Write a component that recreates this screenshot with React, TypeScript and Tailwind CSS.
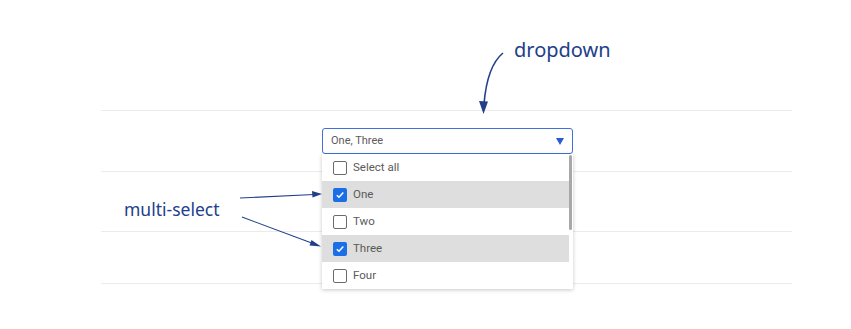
import React from 'react';

const options = [
  { label: 'Select all', checked: false },
  { label: 'One', checked: true },
  { label: 'Two', checked: false },
  { label: 'Three', checked: true },
  { label: 'Four', checked: false },
];

const Checkbox: React.FC<{ checked: boolean }> = ({ checked }) =>
  checked ? (
    <span className="flex h-[14px] w-[14px] items-center justify-center rounded-[2px] bg-[#1a6fe6]">
      <svg width="10" height="10" viewBox="0 0 10 10">
        <path d="M1.8 5.2 L4 7.3 L8.3 2.6" fill="none" stroke="#fff" strokeWidth="1.5" />
      </svg>
    </span>
  ) : (
    <span className="h-[14px] w-[14px] rounded-[2px] border-[1.5px] border-[#6b6b6b] bg-white" />
  );

const App: React.FC = () => {
  return (
    <div className="relative h-[329px] w-[851px] overflow-hidden bg-white font-['Roboto',sans-serif]">
      {/* table rows */}
      <div className="ml-[101px] w-[691px] pt-[110px]">
        <div className="h-[61px] border-t border-[#ebebeb]" />
        <div className="h-[60px] border-t border-[#ebebeb]" />
        <div className="h-[52px] border-t border-[#ebebeb]" />
        <div className="border-t border-[#ebebeb]" />
      </div>

      {/* dropdown */}
      <div className="absolute left-[322px] top-[128px] w-[251px]">
        <div className="flex h-[26px] items-center justify-between rounded-[3px] border-[1.5px] border-[#3f72d8] bg-white pl-[8px] pr-[8px]">
          <span className="text-[11px] text-[#5c5c5c]">One, Three</span>
          <svg width="8" height="7" viewBox="0 0 8 7">
            <path d="M0 0 H8 L4 7 Z" fill="#2a5bd0" />
          </svg>
        </div>
        <div className="relative bg-white shadow-[0_1px_4px_rgba(0,0,0,0.22)]">
          <div className="mr-[4px] flex flex-col">
            {options.map((o) => (
              <div
                key={o.label}
                className={`flex h-[27px] items-center gap-[6px] pl-[11px] pt-[1px] ${o.checked ? 'bg-[#dedede]' : ''}`}
              >
                <Checkbox checked={o.checked} />
                <span className="text-[11.5px] text-[#5a5a5a]">{o.label}</span>
              </div>
            ))}
          </div>
          <div className="absolute right-[1px] top-[1px] h-[75px] w-[3px] rounded-full bg-[#a8a8a8]" />
        </div>
      </div>

      {/* annotations */}
      <span className="absolute left-[514px] top-[35px] font-['Noto_Sans',sans-serif] text-[20px] text-[#22408a]">
        dropdown
      </span>
      <span className="absolute left-[124px] top-[196px] font-['Noto_Sans',sans-serif] text-[17.5px] text-[#22408a]">
        multi-select
      </span>
      <svg className="pointer-events-none absolute left-0 top-0" width="851" height="329">
        <path d="M503 53 C492 62 486 80 484 104" fill="none" stroke="#22408a" strokeWidth="1.6" />
        <path d="M479 101 L483.5 114 L488 101.5 Z" fill="#22408a" />
        <path d="M240 198 L314 194.5" fill="none" stroke="#22408a" strokeWidth="1.1" />
        <path d="M312 191 L322 194 L312.5 197.5 Z" fill="#22408a" />
        <path d="M242 217 L313 243.5" fill="none" stroke="#22408a" strokeWidth="1.1" />
        <path d="M311.5 240 L321 246.5 L309.5 245.5 Z" fill="#22408a" />
      </svg>
    </div>
  );
};

export default App;
